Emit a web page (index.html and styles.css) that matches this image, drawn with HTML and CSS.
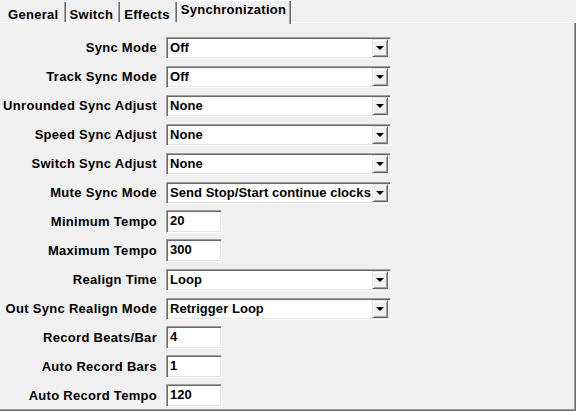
FILE: index.html
```html
<!DOCTYPE html>
<html>
<head>
<meta charset="utf-8">
<link rel="stylesheet" href="styles.css">
</head>
<body>
<div class="tabs">
  <div class="tab">General</div>
  <div class="tab">Switch</div>
  <div class="tab">Effects</div>
  <div class="tab active">Synchronization</div>
  <div class="tab-fill"></div>
</div>
<div class="panel">
  <div class="form">
    <label>Sync Mode</label><div class="combo"><span>Off</span><i class="btn"></i></div>
    <label>Track Sync Mode</label><div class="combo"><span>Off</span><i class="btn"></i></div>
    <label>Unrounded Sync Adjust</label><div class="combo"><span>None</span><i class="btn"></i></div>
    <label>Speed Sync Adjust</label><div class="combo"><span>None</span><i class="btn"></i></div>
    <label>Switch Sync Adjust</label><div class="combo"><span>None</span><i class="btn"></i></div>
    <label>Mute Sync Mode</label><div class="combo"><span>Send Stop/Start continue clocks</span><i class="btn"></i></div>
    <label>Minimum Tempo</label><div class="field">20</div>
    <label>Maximum Tempo</label><div class="field">300</div>
    <label>Realign Time</label><div class="combo"><span>Loop</span><i class="btn"></i></div>
    <label>Out Sync Realign Mode</label><div class="combo"><span>Retrigger Loop</span><i class="btn"></i></div>
    <label>Record Beats/Bar</label><div class="field">4</div>
    <label>Auto Record Bars</label><div class="field">1</div>
    <label>Auto Record Tempo</label><div class="field">120</div>
  </div>
</div>
</body>
</html>
```
FILE: styles.css
```css
html, body {
  margin: 0;
  padding: 0;
  background: #f0f0f0;
}
body {
  width: 576px;
  height: 411px;
  overflow: hidden;
  font-family: "Liberation Sans", Arial, sans-serif;
  font-weight: bold;
  font-size: 13px;
  letter-spacing: 0.3px;
  color: #000;
}
.tabs {
  display: flex;
  height: 23px;
  align-items: stretch;
}
.tab {
  padding: 5px 7px 0 4px;
  margin-top: 2px;
  box-shadow: inset -1px 0 0 #696969, inset -2px 0 0 #a0a0a0;
  line-height: 15px;
  border-bottom: 1px solid #fff;
  box-sizing: border-box;
}
.tab:first-child { padding-left: 8px; }
.tab.active {
  margin-top: 0;
  padding: 2px 5px 0 4px;
  border-bottom: none;
  box-shadow: inset 1px 0 0 #fff, inset 0 1px 0 #fff, inset -1px 0 0 #696969, inset -2px 0 0 #a0a0a0;
  height: 24px;
  position: relative;
  z-index: 1;
  background: #f0f0f0;
}
.tab-fill {
  flex: 1;
  border-bottom: 1px solid #fff;
}
.panel {
  height: 388px;
  box-sizing: border-box;
  box-shadow: inset -1px 0 0 #696969, inset -2px 0 0 #a0a0a0, inset 0 -1px 0 #696969, inset 0 -2px 0 #a0a0a0;
  padding-top: 10px;
}
.form {
  display: grid;
  grid-template-columns: 157px auto;
  column-gap: 9px;
  grid-auto-rows: 29px;
  align-items: center;
  justify-items: start;
}
label {
  justify-self: end;
  white-space: nowrap;
}
.combo {
  width: 225px;
  height: 22px;
  box-sizing: border-box;
  background: #fff;
  border-top: 1px solid #a0a0a0;
  border-left: 1px solid #a0a0a0;
  border-right: 1px solid #fff;
  border-bottom: 1px solid #fff;
  box-shadow: inset 1px 1px 0 #696969, inset -1px -1px 0 #e3e3e3;
  display: flex;
  align-items: center;
  padding: 0 2px 0 3px;
  letter-spacing: 0.05px;
}
.combo span {
  flex: 1;
  white-space: nowrap;
  overflow: hidden;
}
.btn {
  width: 16px;
  height: 18px;
  box-sizing: border-box;
  background: #f0f0f0;
  border-top: 1px solid #e3e3e3;
  border-left: 1px solid #e3e3e3;
  border-right: 1px solid #696969;
  border-bottom: 1px solid #696969;
  box-shadow: inset 1px 1px 0 #fff, inset -1px -1px 0 #a0a0a0;
  position: relative;
}
.btn::after {
  content: "";
  position: absolute;
  left: 3px;
  top: 6px;
  border-left: 4px solid transparent;
  border-right: 4px solid transparent;
  border-top: 4px solid #000;
}
.field {
  width: 56px;
  height: 23px;
  box-sizing: border-box;
  background: #fff;
  border-top: 1px solid #a0a0a0;
  border-left: 1px solid #a0a0a0;
  border-right: 1px solid #fff;
  border-bottom: 1px solid #fff;
  box-shadow: inset 1px 1px 0 #696969, inset -1px -1px 0 #e3e3e3;
  padding: 2px 0 0 3px;
  line-height: 15px;
  letter-spacing: 0.05px;
}
```
